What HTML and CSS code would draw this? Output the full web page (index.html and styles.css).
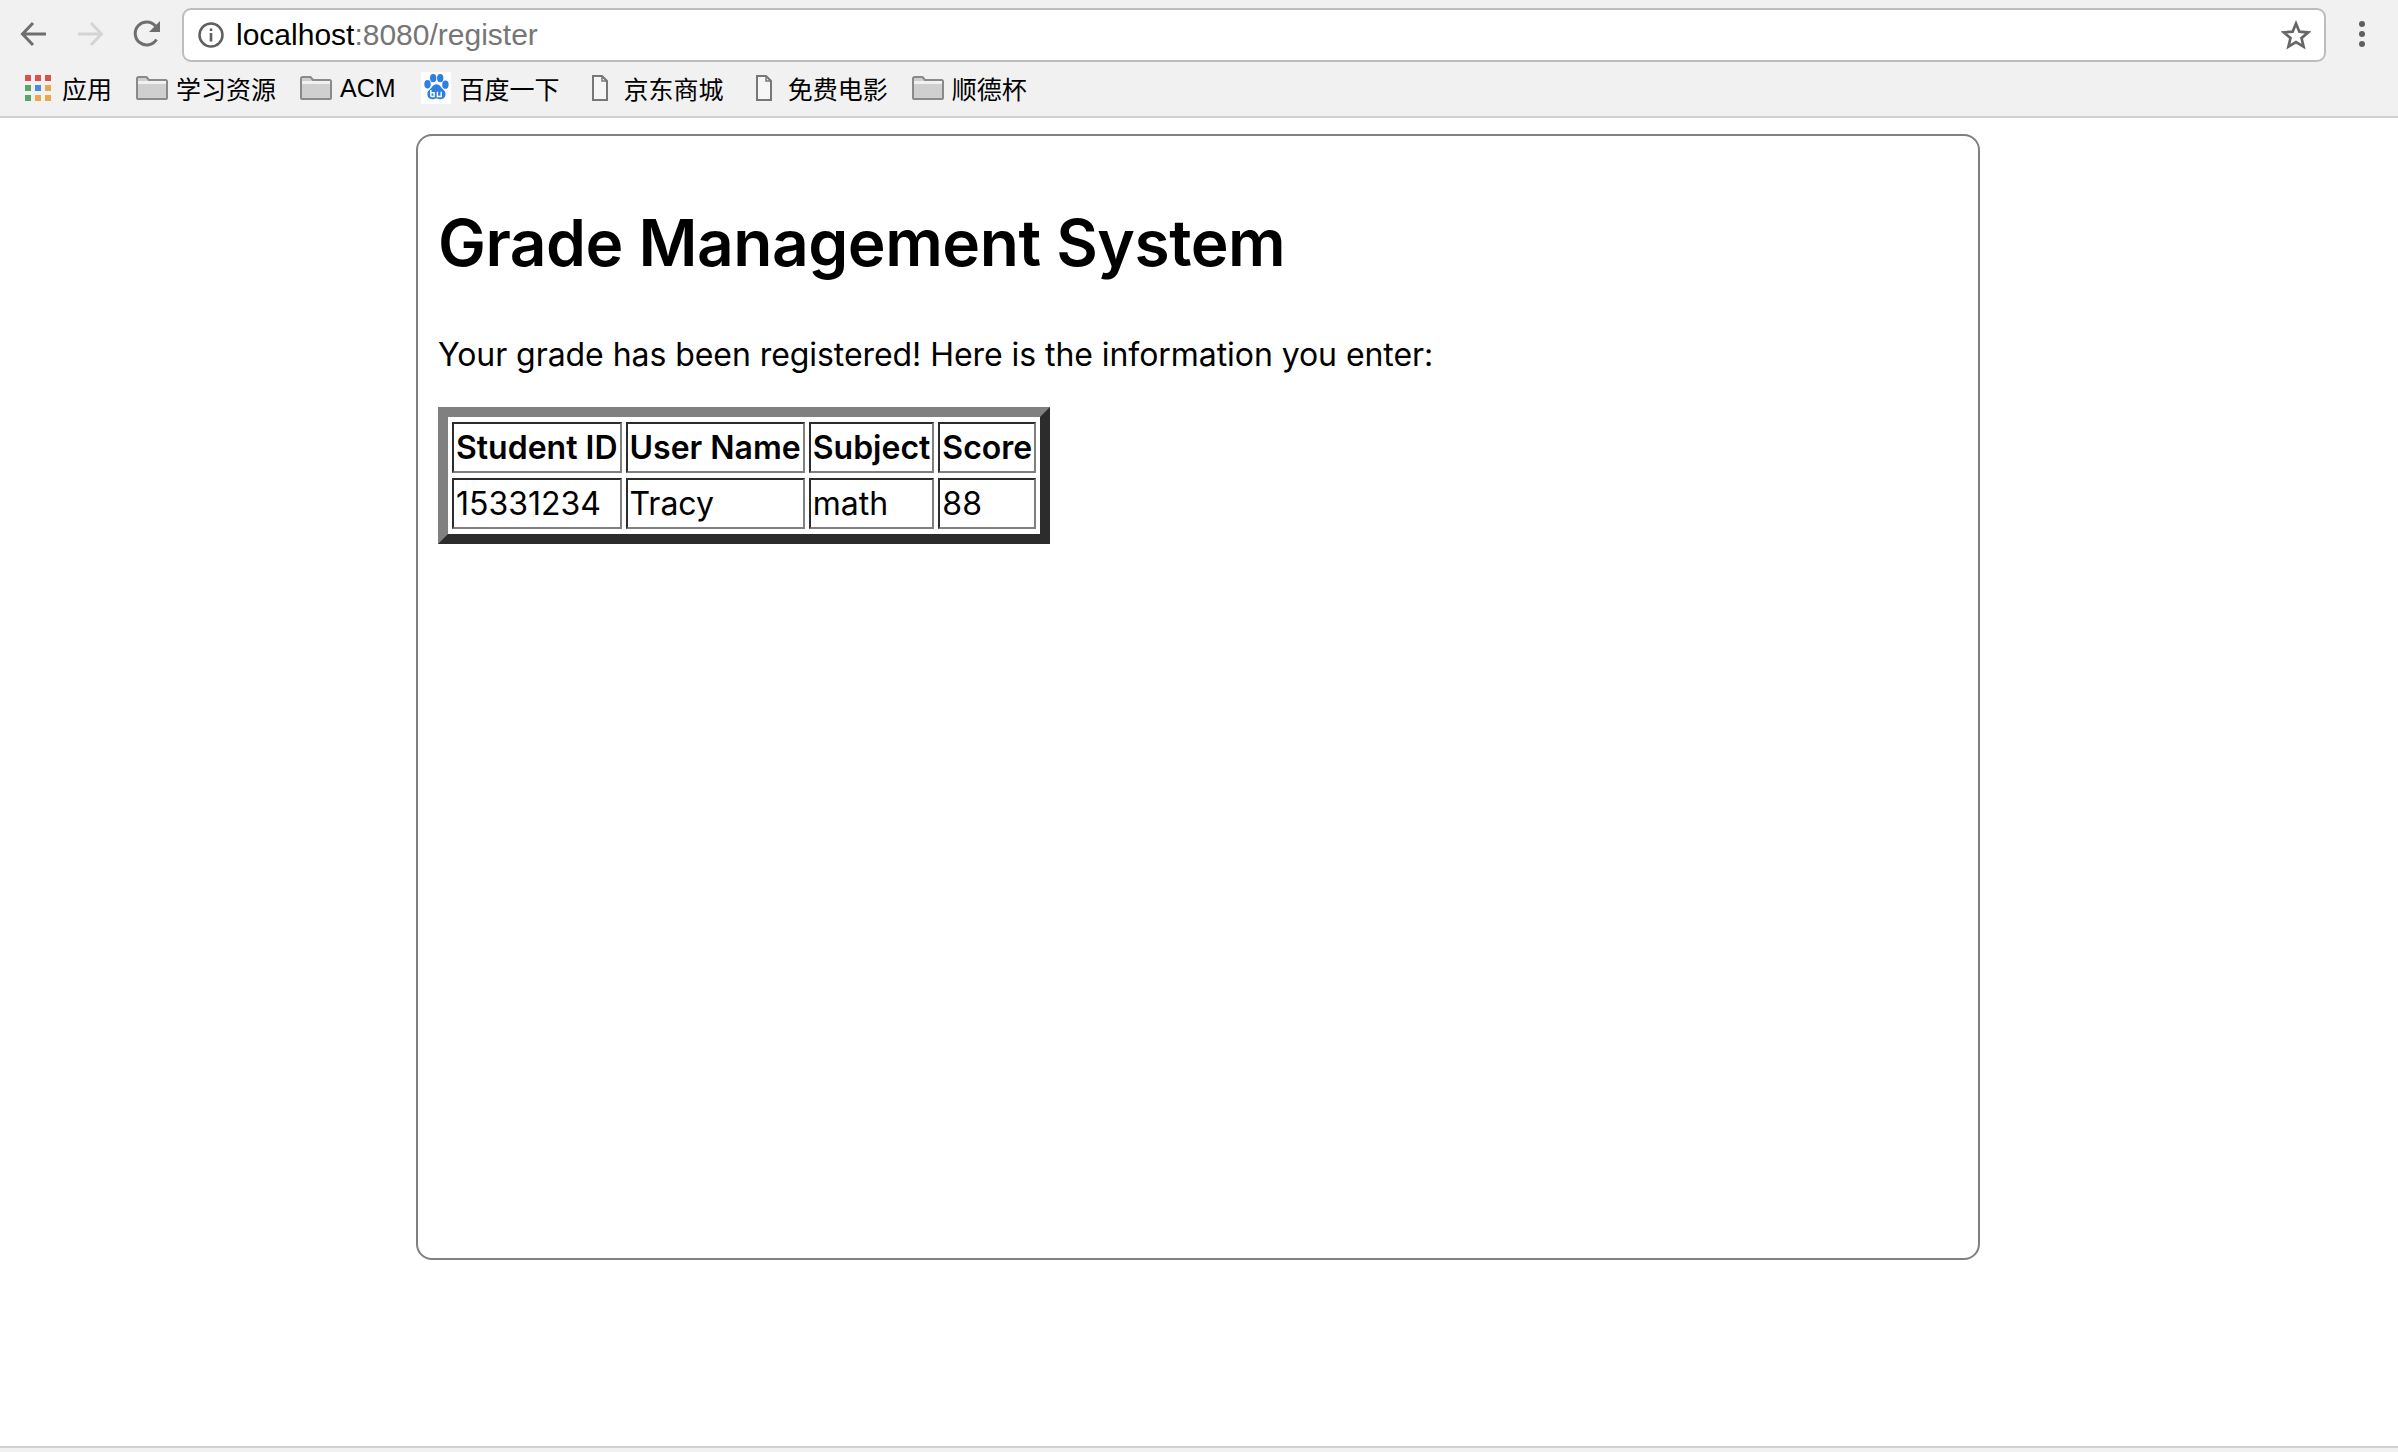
FILE: index.html
```html
<!DOCTYPE html>
<html lang="zh">
<head>
<meta charset="utf-8">
<title>localhost:8080/register</title>
<link rel="stylesheet" href="styles.css">
</head>
<body>
<header class="chrome">
  <div class="toolbar">
    <svg class="nav" width="30" height="30" viewBox="0 0 30 30"><path d="M27 15H4M14 4 3.500 15 14 26" fill="none" stroke="#6e6e6e" stroke-width="3"/></svg>
    <svg class="nav" width="30" height="30" viewBox="0 0 30 30"><path d="M3 15h23M16 4l10.500 11L16 26" fill="none" stroke="#d4d4d4" stroke-width="3"/></svg>
    <svg class="nav" width="30" height="30" viewBox="0 0 30 30"><path d="M24.500 20.500A11.500 11.500 0 1 1 23.500 7" fill="none" stroke="#6e6e6e" stroke-width="3"/><path d="M28 2v11H17z" fill="#6e6e6e"/></svg>
    <div class="omnibox">
      <svg class="info" width="28" height="28" viewBox="0 0 28 28"><circle cx="14" cy="14" r="11.500" fill="none" stroke="#5f5f5f" stroke-width="2.500"/><path d="M12.700 7.500h2.600v2.600h-2.600zM12.700 12h2.600v8.500h-2.600z" fill="#5f5f5f"/></svg>
      <div class="url"><span class="host">localhost</span>:8080/register</div>
      <svg class="star" width="30" height="30" viewBox="0 0 30 30"><path d="m15 3.500 3.400 8.200 8.800.7-6.700 5.700 2.100 8.600-7.600-4.600-7.600 4.600 2.100-8.600-6.700-5.700 8.800-.7z" fill="none" stroke="#666" stroke-width="2.700"/></svg>
    </div>
    <div class="menu"><i></i><i></i><i></i></div>
  </div>
  <nav class="bookmarks">
    <div class="bm apps">
      <svg width="26" height="26" viewBox="0 0 26 26"><path fill="#d9534a" d="M0 0h6v6H0zM10 0h6v6h-6zM20 0h6v6h-6z"/><path fill="#5aa469" d="M0 10h6v6H0z"/><path fill="#4a8be0" d="M10 10h6v6h-6z"/><path fill="#e5a84b" d="M20 10h6v6h-6z"/><path fill="#5aa469" d="M0 20h6v6H0z"/><path fill="#e5a84b" d="M10 20h6v6h-6zM20 20h6v6h-6z"/></svg>
      <span>应用</span>
    </div>
    <div class="bm">
      <svg width="32" height="24" viewBox="0 0 32 24"><path d="M1 22V2.500C1 1.700 1.700 1 2.500 1h8L13 4h16.500c.8 0 1.500.7 1.500 1.500V22c0 .6-.5 1-1 1H2c-.5 0-1-.4-1-1z" fill="#cfcfcf" stroke="#8a8a8a" stroke-width="2"/><path d="M2 5h28v3H2z" fill="#f1f1f1"/></svg>
      <span>学习资源</span>
    </div>
    <div class="bm">
      <svg width="32" height="24" viewBox="0 0 32 24"><path d="M1 22V2.500C1 1.700 1.700 1 2.500 1h8L13 4h16.500c.8 0 1.500.7 1.500 1.500V22c0 .6-.5 1-1 1H2c-.5 0-1-.4-1-1z" fill="#cfcfcf" stroke="#8a8a8a" stroke-width="2"/><path d="M2 5h28v3H2z" fill="#f1f1f1"/></svg>
      <span>ACM</span>
    </div>
    <div class="bm">
      <svg width="32" height="32" viewBox="0 0 32 34"><path fill="#fff" d="M0 0h32v34H0z"/><g fill="#2f7fe0"><ellipse cx="7" cy="13" rx="3.400" ry="4.400"/><ellipse cx="13" cy="6.500" rx="3.400" ry="4.500"/><ellipse cx="20.500" cy="6.500" rx="3.400" ry="4.500"/><ellipse cx="26" cy="13.500" rx="3.400" ry="4.400"/><path d="M16.500 13c4 0 5 4 8 6.500 3 3 2 9-3 9.500-2 .2-3.500-.8-5-.8s-3 1-5 .8c-5-.5-6-6.500-3-9.500 3-2.500 4-6.500 8-6.500z"/></g><path d="M10.500 19v7M10.500 22h3.500v4h-3.500M17.500 21v5h4v-5" fill="none" stroke="#fff" stroke-width="1.500"/></svg>
      <span>百度一下</span>
    </div>
    <div class="bm doc">
      <svg width="16" height="26" viewBox="0 0 16 26"><path d="M1 1h9l5 5v19H1z" fill="#f6f6f6" stroke="#777" stroke-width="2"/><path d="M10 1v5h5" fill="none" stroke="#777" stroke-width="1.500"/></svg>
      <span>京东商城</span>
    </div>
    <div class="bm doc">
      <svg width="16" height="26" viewBox="0 0 16 26"><path d="M1 1h9l5 5v19H1z" fill="#f6f6f6" stroke="#777" stroke-width="2"/><path d="M10 1v5h5" fill="none" stroke="#777" stroke-width="1.500"/></svg>
      <span>免费电影</span>
    </div>
    <div class="bm">
      <svg width="32" height="24" viewBox="0 0 32 24"><path d="M1 22V2.500C1 1.700 1.700 1 2.500 1h8L13 4h16.500c.8 0 1.500.7 1.500 1.500V22c0 .6-.5 1-1 1H2c-.5 0-1-.4-1-1z" fill="#cfcfcf" stroke="#8a8a8a" stroke-width="2"/><path d="M2 5h28v3H2z" fill="#f1f1f1"/></svg>
      <span>顺德杯</span>
    </div>
  </nav>
</header>
<main class="page">
  <section class="card">
    <h1 class="title">Grade Management System</h1>
    <p class="lead">Your grade has been registered! Here is the information you enter:</p>
    <table class="grades">
      <tr><th>Student ID</th><th>User Name</th><th>Subject</th><th>Score</th></tr>
      <tr><td>15331234</td><td>Tracy</td><td>math</td><td>88</td></tr>
    </table>
  </section>
</main>
<footer class="strip"></footer>
</body>
</html>
```
FILE: styles.css
```css
html, body { height: 100%; }
body {
  margin: 0;
  display: flex;
  flex-direction: column;
  background: #fff;
  color: #000;
  font-family: "Inter", "Noto Sans CJK SC", sans-serif;
  overflow: hidden;
}
.chrome {
  height: 116px;
  background: #f1f1f1;
  border-bottom: 2px solid #d0d0d0;
  flex: none;
}
.toolbar {
  height: 68px;
  display: flex;
  align-items: center;
  padding: 0 20px 0 19px;
}
.nav { margin-right: 26px; flex: none; }
.nav:nth-child(3) { margin-right: 20px; margin-left: 1px; }
.omnibox {
  flex: 1;
  height: 54px;
  box-sizing: border-box;
  margin-top: 1px;
  background: #fff;
  border: 2px solid #bdbdbd;
  border-radius: 9px;
  display: flex;
  align-items: center;
  padding: 0 13px 0 13px;
}
.info { flex: none; margin-right: 11px; }
.url {
  flex: 1;
  font: 30px "Liberation Sans", sans-serif;
  color: #767676;
}
.host { color: #000; }
.menu {
  width: 11px;
  margin-left: 33px;
  margin-right: 8px;
  display: flex;
  flex-direction: column;
  gap: 4px;
}
.menu i { width: 6px; height: 6px; border-radius: 50%; background: #5f5f5f; display: block; }
.bookmarks {
  height: 40px;
  display: flex;
  align-items: center;
  padding-left: 25px;
  font: 25px "Liberation Sans", "Noto Sans CJK SC", sans-serif;
}
.bm { display: flex; align-items: center; gap: 8px; margin-right: 24px; white-space: nowrap; }
.bm svg { flex: none; }
.apps { gap: 11px; }
.doc { gap: 16px; margin-left: 8px; }
.page { flex: 1; min-height: 0; padding: 16px 2px 0 0; }
.card {
  box-sizing: border-box;
  width: 1564px;
  height: 1126px;
  margin: 0 auto;
  padding: 0 20px;
  border: 2px solid #808080;
  border-radius: 16px;
}
.title { font-size: 64px; font-weight: 600; letter-spacing: -0.48px; margin: 69px 0 54px; line-height: 1.2; }
.lead { font-size: 32px; letter-spacing: -0.06px; margin: 0 0 33px; line-height: 1.2; }
.grades { border: 10px outset #808080; border-spacing: 4px 5px; font-size: 32px; }
.grades th, .grades td { border: 2px inset #808080; padding: 2px; line-height: 43px; }
.grades th { font-weight: 600; }
.strip { height: 6px; background: #f1f1f1; border-top: 2px solid #d0d0d0; flex: none; box-sizing: border-box; }
```
